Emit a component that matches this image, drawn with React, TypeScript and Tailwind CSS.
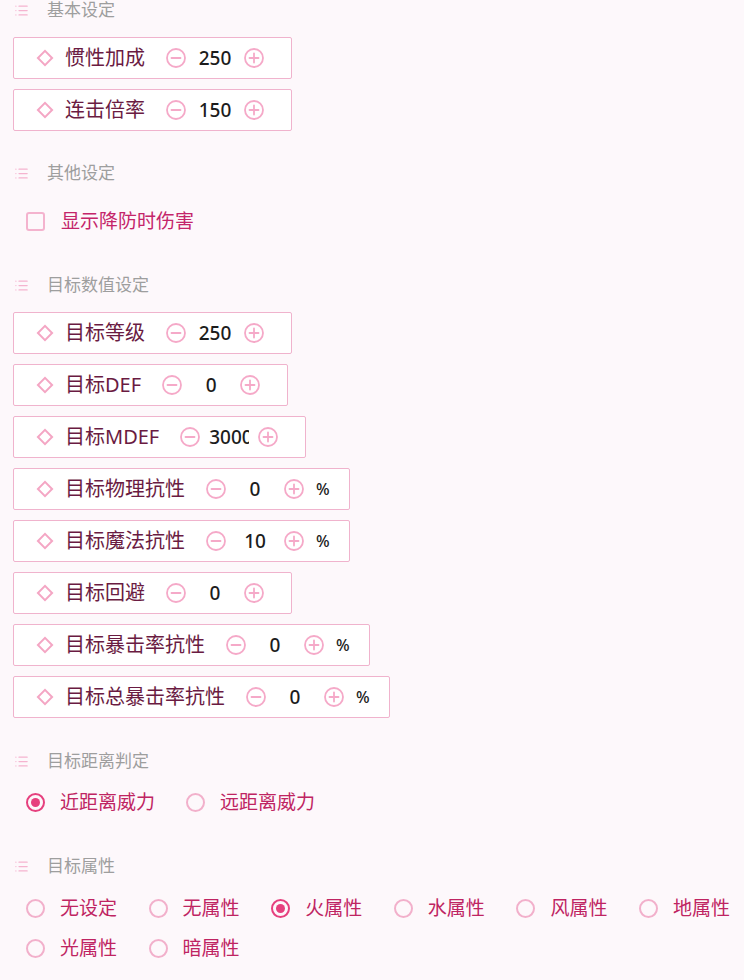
import { List } from "lucide-react";

const font = { fontFamily: '"Noto Sans", "Noto Sans CJK SC", sans-serif' };

function Header({ title }: { title: string }) {
  return (
    <div className="flex items-center h-5 pl-[14px]">
      <List size={15} strokeWidth={2} className="text-[#f5b3cf]" />
      <span className="ml-[18px] text-[17px] leading-5 text-[#9e9e9e]">{title}</span>
    </div>
  );
}

function CircleBtn({ plus }: { plus?: boolean }) {
  return (
    <svg width="20" height="20" viewBox="0 0 20 20" fill="none" stroke="#f5a9c8" strokeWidth="1.8" strokeLinecap="round">
      <circle cx="10" cy="10" r="9" />
      <line x1="5.5" y1="10" x2="14.5" y2="10" />
      {plus && <line x1="10" y1="5.5" x2="10" y2="14.5" />}
    </svg>
  );
}

function NumRow({ label, value, pct }: { label: string; value: string; pct?: boolean }) {
  return (
    <div className="self-start inline-flex items-center h-[42px] border border-[#f0b3cd] rounded-[2px] bg-white pl-[23px] pr-[19px]">
      <span className="w-[16px] h-[16px] flex items-center justify-center">
        <span className="w-[12px] h-[12px] shrink-0 border-2 border-[#f4a6c4] rotate-45" />
      </span>
      <span className="ml-[12px] text-[20px] leading-7 text-[#6a1b42]">{label}</span>
      <span className="ml-[21px] flex">
        <CircleBtn />
      </span>
      <input
        readOnly
        value={value}
        className="w-[40px] mx-[9px] text-center text-[19px] font-medium leading-7 text-[#1c1c1c] bg-transparent outline-none p-0"
        style={font}
      />
      <CircleBtn plus />
      {pct ? (
        <span className="ml-3 text-[16px] font-medium text-[#222]">%</span>
      ) : (
        <span className="ml-2" />
      )}
    </div>
  );
}

function Radio({ label, on }: { label: string; on?: boolean }) {
  return (
    <div className="flex items-center h-5">
      <span
        className={
          on
            ? "w-[19px] h-[19px] rounded-full border-2 border-[#e6407e] flex items-center justify-center"
            : "w-[19px] h-[19px] rounded-full border-2 border-[#f2b0cb]"
        }
      >
        {on && <span className="w-[9px] h-[9px] rounded-full bg-[#e6407e]" />}
      </span>
      <span className="ml-[15px] text-[19px] leading-5 text-[#bf2462]">{label}</span>
    </div>
  );
}

export default function App() {
  return (
    <div className="w-full min-h-screen bg-[#fdf8fb] pt-px" style={font}>
      {/* 基本设定 */}
      <div className="-mt-px">
        <Header title="基本设定" />
      </div>
      <div className="flex flex-col gap-[10px] pl-[13px] mt-[17px]">
        <NumRow label="惯性加成" value="250" />
        <NumRow label="连击倍率" value="150" />
      </div>

      {/* 其他设定 */}
      <div className="mt-[32px]">
        <Header title="其他设定" />
      </div>
      <div className="flex items-center h-5 pl-[26px] mt-[28px]">
        <span className="w-[19px] h-[19px] rounded-[3px] border-2 border-[#f4b3ce]" />
        <span className="ml-4 text-[19px] leading-5 text-[#c4256a]">显示降防时伤害</span>
      </div>

      {/* 目标数值设定 */}
      <div className="mt-[44px]">
        <Header title="目标数值设定" />
      </div>
      <div className="flex flex-col gap-[10px] pl-[13px] mt-[17px]">
        <NumRow label="目标等级" value="250" />
        <NumRow label="目标DEF" value="0" />
        <NumRow label="目标MDEF" value="3000" />
        <NumRow label="目标物理抗性" value="0" pct />
        <NumRow label="目标魔法抗性" value="10" pct />
        <NumRow label="目标回避" value="0" />
        <NumRow label="目标暴击率抗性" value="0" pct />
        <NumRow label="目标总暴击率抗性" value="0" pct />
      </div>

      {/* 目标距离判定 */}
      <div className="mt-[33px]">
        <Header title="目标距离判定" />
      </div>
      <div className="flex items-center gap-[31px] pl-[26px] mt-[21px]">
        <Radio label="近距离威力" on />
        <Radio label="远距离威力" />
      </div>

      {/* 目标属性 */}
      <div className="mt-[44px]">
        <Header title="目标属性" />
      </div>
      <div className="grid grid-cols-[repeat(6,122.6px)] gap-y-5 pl-[26px] mt-[22px] pb-4">
        <Radio label="无设定" />
        <Radio label="无属性" />
        <Radio label="火属性" on />
        <Radio label="水属性" />
        <Radio label="风属性" />
        <Radio label="地属性" />
        <Radio label="光属性" />
        <Radio label="暗属性" />
      </div>
    </div>
  );
}
